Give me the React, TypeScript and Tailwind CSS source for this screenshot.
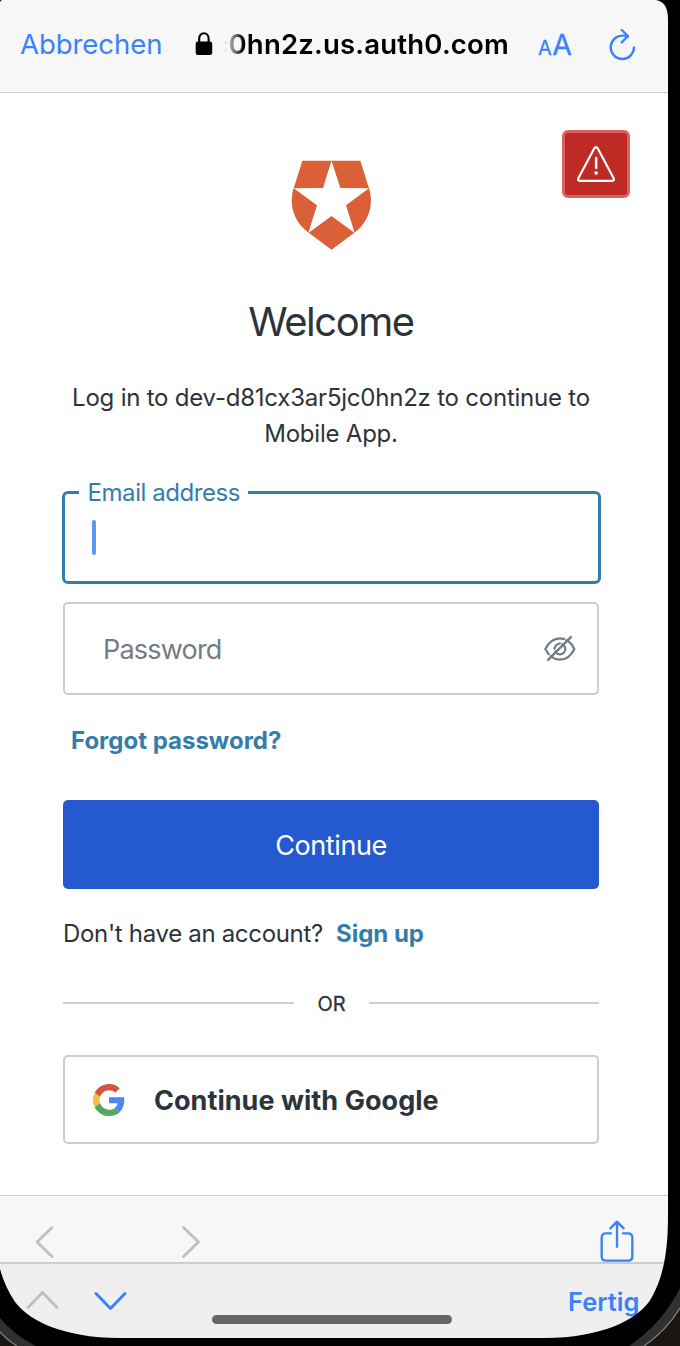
import React from "react";

function Auth0Logo() {
  return (
    <svg className="h-[92px] w-[84px]" viewBox="180 57 252 276">
      <path
        fill="#db6037"
        d="M217 62H391L416 142C433 192 418 245 373 278L304.500 329L236 278C190 245 175 192 192 142Z"
      />
      <path
        fill="#fff"
        d="M304.500 62L331 144L417 145L348 196L374 279L304.500 228L235 279L261 196L191 145L279 144Z"
      />
    </svg>
  );
}

function BrowserBar() {
  return (
    <header className="flex h-[93px] shrink-0 items-start border-b border-[#cfcfd1] bg-[#f7f7f7] pl-5 pt-[25px] text-[27.500px] leading-10">
      <span className="-mt-px w-[175px] whitespace-nowrap tracking-[-0.050px] text-[#3a82f7]">Abbrechen</span>
      <svg className="mt-[7px] h-[24px] w-[18px] shrink-0" viewBox="0 0 18 24">
        <rect x="0.700" y="9.500" width="16.500" height="13.500" rx="2.200" fill="#000" />
        <path d="M4.200 11V6.200a4.700 5 0 0 1 9.400 0V11" fill="none" stroke="#000" strokeWidth="2.100" />
      </svg>
      <div className="-mt-px ml-[11px] flex w-[285px] justify-end overflow-hidden whitespace-nowrap font-semibold text-black [mask-image:linear-gradient(to_right,transparent_0px,rgba(0,0,0,0.200)_4px,rgba(0,0,0,0.500)_10px,black_20px)]">
        <span className="tracking-[0.200px]">c0hn2z.us.auth0.com</span>
      </div>
      <span className="ml-[29px] flex w-[34px] items-baseline whitespace-nowrap text-[#3a82f7] [-webkit-text-stroke:0.300px_#3a82f7]">
        <span className="text-[20px] tracking-[-0.500px]">A</span>
        <span className="ml-px text-[28.500px] tracking-[-1px]">A</span>
      </span>
      <svg className="ml-[36px] mt-[3px] h-[34px] w-[28px] shrink-0" viewBox="804 84 84 102" fill="none" stroke="#3a82f7" strokeWidth="7" strokeLinecap="round" strokeLinejoin="round">
        <path d="M882 142A35 35 0 1 1 847 107Q856 106 864 110" />
        <path d="M845 90L864 108L845 127" />
      </svg>
    </header>
  );
}

function EyeOff() {
  return (
    <svg className="h-[28px] w-[34px]" viewBox="610 796 102 84" fill="none" stroke="#757b84" strokeWidth="6.500">
      <path d="M617 838Q633 806 661 806Q689 806 704 838Q689 870 661 870Q633 870 617 838Z" />
      <circle cx="661" cy="838" r="16" />
      <path d="M619 868L692 795" stroke="#fff" strokeWidth="3" />
      <path d="M623 873L696 800" strokeWidth="7" />
    </svg>
  );
}

function GoogleLogo() {
  return (
    <svg className="h-8 w-8" viewBox="0 0 48 48">
      <path fill="#d95040" d="M24 9.500c3.540 0 6.710 1.220 9.210 3.600l6.850-6.850C35.900 2.380 30.470 0 24 0 14.620 0 6.510 5.380 2.560 13.220l7.980 6.190C12.430 13.720 17.740 9.500 24 9.500z" />
      <path fill="#5383ec" d="M46.980 24.550c0-1.570-.15-3.090-.38-4.550H24v9.020h12.940c-.58 2.960-2.260 5.480-4.780 7.180l7.730 6c4.510-4.180 7.090-10.360 7.090-17.650z" />
      <path fill="#f2c043" d="M10.530 28.590c-.48-1.450-.76-2.990-.76-4.590s.27-3.140.76-4.590l-7.980-6.190C.92 16.460 0 20.120 0 24c0 3.880.92 7.540 2.560 10.780l7.970-6.190z" />
      <path fill="#58a55c" d="M24 48c6.480 0 11.930-2.130 15.890-5.810l-7.730-6c-2.150 1.450-4.920 2.300-8.160 2.300-6.260 0-11.570-4.220-13.470-9.910l-7.980 6.190C6.510 42.620 14.620 48 24 48z" />
    </svg>
  );
}

function LoginPage() {
  return (
    <main className="flex h-[1102px] shrink-0 flex-col bg-white pl-[63px] pr-[69px] text-[#2d333a]">
      <div className="-mr-[31px] flex h-[156px] shrink-0 items-start pt-[37px]">
        <div className="ml-[227px] mt-[29px]">
          <Auth0Logo />
        </div>
        <button className="ml-auto flex h-[68px] w-[68px] items-center justify-center rounded-md border-[3px] border-[#da625e] bg-[#be2b25]">
          <svg className="h-[38px] w-[40px]" viewBox="708 435 120 114" fill="none" stroke="#fff" strokeWidth="6.500" strokeLinecap="round" strokeLinejoin="round">
            <path d="M763 445Q768 438 773 445L821 535Q824 542 816 542.500H720Q712 542 715 535Z" />
            <path d="M768.500 474V503" strokeWidth="7.500" />
            <circle cx="768.500" cy="519" r="3" fill="#fff" strokeWidth="5" />
          </svg>
        </button>
      </div>
      <h1 className="mt-[49px] text-center text-[40px] leading-[48px] tracking-[-1.450px]">Welcome</h1>
      <p className="mt-[34px] text-center text-[24px] leading-9 tracking-[-0.220px]">
        <span className="block whitespace-nowrap">Log in to dev-d81cx3ar5jc0hn2z to continue to</span>
        <span className="block">Mobile App.</span>
      </p>
      <div className="relative -mx-px mt-[39px] h-[93px] w-[539px] shrink-0 self-center rounded-[6px] border-[3px] border-[#347dab] pl-[28px] pt-[26px]">
        <span className="absolute left-[14px] top-[-19px] bg-white pl-[9px] pr-[8px] text-[24px] leading-9 tracking-[-0.430px] whitespace-nowrap text-[#347dab]">Email address</span>
        <span className="-ml-px block h-[35px] w-[4px] rounded-sm bg-[#5c98f8]" />
      </div>
      <div className="mt-[18px] flex h-[93px] shrink-0 items-center justify-between rounded-[5px] border-2 border-[#c8ccd3] pl-[38px] pr-[20px]">
        <span className="pt-[4px] text-[27px] tracking-[-0.800px] text-[#757b84]">Password</span>
        <EyeOff />
      </div>
      <a className="mt-[27px] pl-[8px] text-[24px] font-bold leading-[38px] text-[#347dab]">Forgot password?</a>
      <button className="mt-[40px] h-[89px] shrink-0 rounded-[5px] bg-[#2459cf] pt-[3px] text-[27px] tracking-[-0.400px] text-white">Continue</button>
      <p className="mt-[27px] flex gap-[13px] whitespace-nowrap text-[24px] leading-9">
        <span className="tracking-[-0.320px]">Don't have an account?</span>
        <a className="font-bold text-[#347dab]">Sign up</a>
      </p>
      <div className="mt-[37px] flex h-[28px] shrink-0 items-center">
        <span className="h-[2px] w-[231px] bg-[#cbced3]" />
        <span className="flex-1 pt-px text-center text-[20px] [-webkit-text-stroke:0.300px_#2d333a]">OR</span>
        <span className="h-[2px] w-[230px] bg-[#cbced3]" />
      </div>
      <button className="mt-[38px] flex h-[89px] shrink-0 items-center rounded-[5px] border-2 border-[#c8ccd3] pl-[28px] text-[27px] font-bold">
        <GoogleLogo />
        <span className="ml-[29px] whitespace-nowrap pt-[3px] tracking-[0.040px]">Continue with Google</span>
      </button>
    </main>
  );
}

function BottomBars() {
  return (
    <footer className="flex flex-col">
      <div className="flex h-[67px] items-start border-t border-[#cfcfd1] bg-[#f7f7f7] pl-[34px] pr-[34px] pt-[24px]">
        <svg className="mt-[4px] h-[36px] w-[22px]" viewBox="0 0 22 36" fill="none" stroke="#bfbfbf" strokeWidth="2.700" strokeLinecap="round" strokeLinejoin="round">
          <path d="M18 3.500L3 18L18 32.500" />
        </svg>
        <svg className="ml-[123px] mt-[4px] h-[36px] w-[24px]" viewBox="0 0 24 36" fill="none" stroke="#bfbfbf" strokeWidth="2.700" strokeLinecap="round" strokeLinejoin="round">
          <path d="M4.500 3.500L19.500 18L4.500 32.500" />
        </svg>
        <svg className="ml-auto h-[42px] w-[34px]" viewBox="479 119 102 126" fill="none" stroke="#3a82f7" strokeWidth="7" strokeLinecap="round" strokeLinejoin="round">
          <path d="M512 159H497Q484 159 484 172V228Q484 241 497 241H563Q576 241 576 228V172Q576 159 563 159H548M530 199V125M510 144L530 124L550 144" />
        </svg>
      </div>
      <div className="flex h-[76px] items-start border-t-2 border-[#cdcdcf] bg-[#efefef] pl-[26px] text-[#3a82f7]">
        <svg className="mt-[22px] h-[28px] w-[34px] shrink-0" viewBox="0 0 34 28" fill="none" stroke="#bfbfbf" strokeWidth="2.700" strokeLinecap="round" strokeLinejoin="round">
          <path d="M2 21.500L16.500 6.500L31 21.500" />
        </svg>
        <svg className="ml-[34px] mt-[22px] h-[28px] w-[34px] shrink-0" viewBox="0 0 34 28" fill="none" stroke="#3a82f7" strokeWidth="2.900" strokeLinecap="round" strokeLinejoin="round">
          <path d="M2 7.500L16.500 22.500L31 7.500" />
        </svg>
        <span className="ml-[84px] mt-[51px] h-[9px] w-[240px] shrink-0 rounded-full bg-[#666]" />
        <span className="ml-[116px] mt-[18px] whitespace-nowrap text-[25.500px] font-semibold leading-10">Fertig</span>
      </div>
    </footer>
  );
}

function DeviceFrame() {
  return (
    <svg className="pointer-events-none absolute inset-0 h-[1346px] w-[680px]" viewBox="0 0 680 1346">
      <path d="M656 0Q668 2 668 19V1215C668 1250 664 1275 652 1297C640 1320 600 1338 545 1338H119C64 1338 24 1320 12 1297C6 1287 3 1279 0 1269V1346H680V0Z" fill="#000" />
      <path d="M0 0H2Q1 0 0 2Z" fill="#000" />
      <path d="M680 1288Q662 1324 629 1346H680ZM0 1318Q14 1335 36 1346H0Z" fill="#303030" />
      <path d="M680 1308Q666 1331 644 1346H680ZM0 1332Q7 1340 17 1346H0Z" fill="#181513" />
      <path d="M680 1308Q666 1331 644 1346M0 1332Q7 1340 17 1346" fill="none" stroke="#828282" strokeWidth="1.300" />
    </svg>
  );
}

export default function App() {
  return (
    <div className="relative h-[1346px] w-[680px] overflow-hidden bg-black font-['Inter',sans-serif]">
      <div className="flex w-[668px] flex-col">
        <BrowserBar />
        <LoginPage />
        <BottomBars />
      </div>
      <DeviceFrame />
    </div>
  );
}
